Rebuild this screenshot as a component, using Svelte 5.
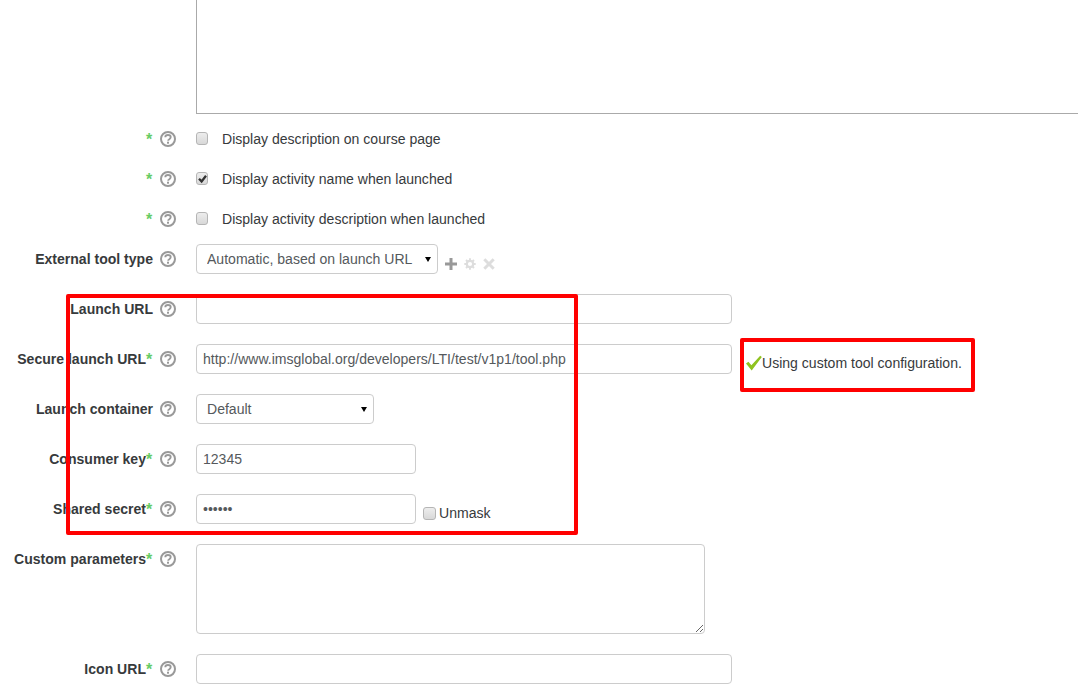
<script>
    const checks = [
        { text: 'Display description on course page', checked: false },
        { text: 'Display activity name when launched', checked: true },
        { text: 'Display activity description when launched', checked: false }
    ];
</script>

{#snippet help()}
    <span class="help">
        <svg width="16" height="16" viewBox="0 0 16 16">
            <circle cx="8" cy="8" r="7" fill="none" stroke="#999" stroke-width="2" />
            <path d="M5.300 6.300c0-1.500 1.100-2.300 2.700-2.300s2.700.9 2.700 2.100c0 1.100-.7 1.600-1.400 2.100-.7.400-1.100.8-1.100 1.500" fill="none" stroke="#999" stroke-width="1.900" />
            <rect x="7" y="10.700" width="2" height="2" fill="#999" />
        </svg>
    </span>
{/snippet}

{#snippet checkbox(checked)}
    <span class="cb">
        {#if checked}
            <svg width="13" height="13" viewBox="0 0 13 13">
                <path d="M3 6.800l2.600 2.600L10 3.800" fill="none" stroke="#333" stroke-width="2.300" />
            </svg>
        {/if}
    </span>
{/snippet}

<div class="page">
    <div class="form">
        <div class="row">
            <div></div>
            <div></div>
            <div class="description"></div>
        </div>

        {#each checks as c}
            <div class="row">
                <div class="label"><span class="star">*</span></div>
                {@render help()}
                <div class="check-line">
                    {@render checkbox(c.checked)}
                    <span>{c.text}</span>
                </div>
            </div>
        {/each}

        <div class="row field">
            <div class="label"><b>External tool type</b></div>
            {@render help()}
            <div class="inline">
                <div class="select tool-type">
                    <select class="input">
                        <option>Automatic, based on launch URL</option>
                    </select>
                </div>
                <div class="tool-icons">
                    <svg width="12" height="12" viewBox="0 0 12 12"><path d="M4.500 0h3v4.500H12v3H7.500V12h-3V7.500H0v-3h4.500z" fill="#999" /></svg>
                    <svg width="12" height="12" viewBox="0 0 12 12">
                        <path d="M6 .3v11.400M.3 6h11.400M2 2l8 8M10 2l-8 8" stroke="#ddd" stroke-width="1.900" />
                        <circle cx="6" cy="6" r="3.200" fill="#fff" stroke="#ddd" stroke-width="2.200" />
                    </svg>
                    <svg width="12" height="12" viewBox="0 0 12 12"><path d="M1.300 1.300l9.400 9.400M10.700 1.300l-9.400 9.400" stroke="#ddd" stroke-width="3" /></svg>
                </div>
            </div>
        </div>

        <div class="row field">
            <div class="label"><b>Launch URL</b></div>
            {@render help()}
            <input class="input wide" type="text" />
        </div>

        <div class="row field">
            <div class="label"><b>Secure launch URL</b><span class="star">*</span></div>
            {@render help()}
            <div class="inline">
                <input class="input wide" type="text" value="http://www.imsglobal.org/developers/LTI/test/v1p1/tool.php" />
                <div class="status">
                    <svg width="16" height="16" viewBox="0 0 16 16"><path d="M0 8.500l2.400-1.800 3 3.600L14.200 .8l1.600 1.200L5.700 15.500z" fill="#8fc31f" /></svg>
                    <span>Using custom tool configuration.</span>
                </div>
            </div>
        </div>

        <div class="row field">
            <div class="label"><b>Launch container</b></div>
            {@render help()}
            <div class="select container">
                <select class="input">
                    <option>Default</option>
                </select>
            </div>
        </div>

        <div class="row field">
            <div class="label"><b>Consumer key</b><span class="star">*</span></div>
            {@render help()}
            <input class="input short" type="text" value="12345" />
        </div>

        <div class="row field">
            <div class="label"><b>Shared secret</b><span class="star">*</span></div>
            {@render help()}
            <div class="inline">
                <input class="input short" type="password" value="123456" />
                <div class="unmask">
                    {@render checkbox(false)}
                    <span>Unmask</span>
                </div>
            </div>
        </div>

        <div class="row field">
            <div class="label"><b>Custom parameters</b><span class="star">*</span></div>
            {@render help()}
            <textarea class="input params"></textarea>
        </div>

        <div class="row field">
            <div class="label"><b>Icon URL</b><span class="star">*</span></div>
            {@render help()}
            <input class="input wide" type="text" />
        </div>
    </div>

    <!-- red annotation boxes drawn over the form -->
    <div class="mark mark-form"></div>
    <div class="mark mark-status"></div>
</div>

<style>
    :global(body) {
        margin: 0;
        background: #fff;
    }
    .page {
        position: relative;
        height: 685px;
        overflow: hidden;
        font-family: "Liberation Sans", Arial, sans-serif;
        font-size: 14.0625px;
        color: #373a3c;
    }
    .form {
        display: flex;
        flex-direction: column;
        gap: 10px;
    }
    .row {
        display: grid;
        grid-template-columns: 153px 43px 1fr;
        align-items: start;
        min-height: 30px;
    }
    .field {
        padding-bottom: 10px;
    }
    .label {
        line-height: 30px;
        height: 30px;
        text-align: right;
        white-space: nowrap;
    }
    .star {
        display: inline-block;
        width: 7px;
        color: #66cc66;
        font-weight: bold;
        font-size: 16px;
        line-height: 20px;
        text-align: left;
        vertical-align: -1px;
    }
    .help {
        display: flex;
        height: 30px;
        align-items: center;
        padding-left: 7px;
    }
    .description {
        height: 113px;
        border-left: 1px solid #aaa;
        border-bottom: 1px solid #aaa;
    }
    .check-line {
        display: flex;
        align-items: center;
        height: 30px;
        gap: 13px;
    }
    .cb {
        display: block;
        box-sizing: border-box;
        width: 12px;
        height: 13px;
        margin-bottom: 2px;
        border: 1px solid #b5b5b5;
        border-radius: 3px;
        background: linear-gradient(#ededed, #d8d8d8);
        flex: none;
        position: relative;
    }
    .check-line .cb {
        margin-right: 1px;
    }
    .cb svg {
        position: absolute;
        left: -1px;
        top: -1px;
    }
    .inline {
        display: flex;
        align-items: flex-start;
        height: 30px;
    }
    .input {
        box-sizing: border-box;
        display: block;
        height: 30px;
        margin: 0;
        padding: 6px;
        border: 1px solid #ccc;
        border-radius: 4px;
        background: #fff;
        color: #55595c;
        font-family: inherit;
        font-size: 14.0625px;
        outline: none;
    }
    .select {
        position: relative;
    }
    .select select {
        width: 100%;
        padding: 0 10px;
        appearance: none;
    }
    /* little black arrow the old browser select had */
    .select::after {
        content: "";
        position: absolute;
        right: 7px;
        top: 13px;
        border-left: 3px solid transparent;
        border-right: 3px solid transparent;
        border-top: 5px solid #000;
    }
    .wide {
        width: 536px;
    }
    .short {
        width: 220px;
    }
    .tool-type {
        width: 242px;
    }
    .container {
        width: 178px;
    }
    .params {
        width: 509px;
        height: 90px;
    }
    .tool-icons {
        display: flex;
        gap: 7px;
        margin: 14px 0 0 7px;
    }
    .status {
        display: flex;
        align-items: center;
        height: 30px;
        margin: 4px 0 0 14px;
        white-space: nowrap;
    }
    .unmask {
        display: flex;
        align-items: center;
        gap: 3px;
        height: 20px;
        margin: 9px 0 0 7px;
    }
    .unmask .cb {
        width: 13px;
        margin-bottom: 0;
    }
    .mark {
        position: absolute;
        box-sizing: border-box;
        border: 4px solid #f00;
        border-radius: 2px;
    }
    .mark-form {
        left: 66px;
        top: 294px;
        width: 512px;
        height: 241px;
    }
    .mark-status {
        left: 740px;
        top: 338px;
        width: 235px;
        height: 54px;
    }
</style>
